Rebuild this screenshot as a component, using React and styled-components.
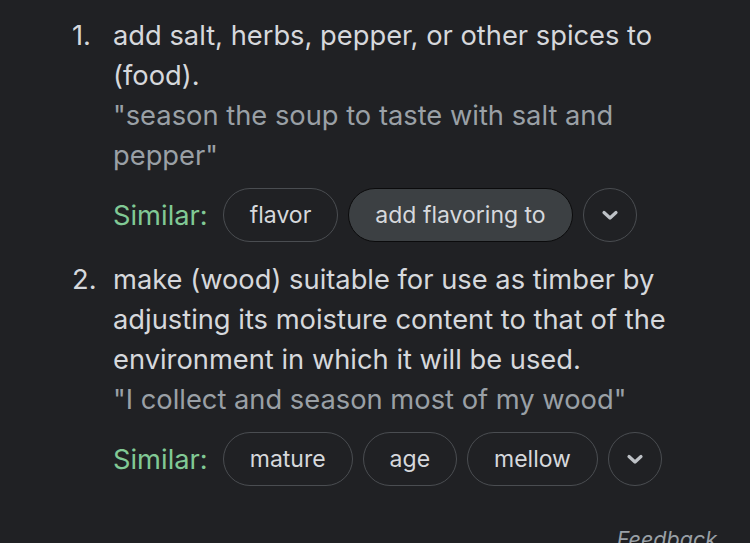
import React from 'react';
import styled, { createGlobalStyle } from 'styled-components';

const GlobalStyle = createGlobalStyle`
  html, body {
    margin: 0;
    padding: 0;
    background: #202124;
  }
  body {
    font-family: Inter, "Noto Sans", sans-serif;
    -webkit-font-smoothing: antialiased;
  }
`;

const Page = styled.div`
  width: 750px;
  height: 543px;
  overflow: hidden;
  background: #202124;
  padding: 16px 0 0 0;
  box-sizing: border-box;
  display: flex;
  flex-direction: column;
`;

const List = styled.ol`
  list-style: none;
  margin: 0;
  padding: 0 0 0 72px;
  display: flex;
  flex-direction: column;
  gap: 18px;
`;

const Item = styled.li`
  display: flex;
`;

const Num = styled.span`
  width: 41px;
  flex: none;
  font-size: 27.3px;
  line-height: 40px;
  color: #d6d8dc;
`;

const Body = styled.div`
  display: flex;
  flex-direction: column;
  width: 570px;
`;

const Definition = styled.div`
  font-size: 27.3px;
  line-height: 40px;
  color: #d6d8dc;
`;

const Example = styled.div`
  font-size: 27.3px;
  line-height: 40px;
  color: #9aa0a6;
`;

const SimilarRow = styled.div`
  display: flex;
  align-items: center;
  gap: 10px;
  margin-top: 12px;
`;

const Label = styled.span`
  font-size: 27.3px;
  color: #81c995;
  margin-right: 5px;
`;

const Chip = styled.span`
  height: 54px;
  box-sizing: border-box;
  padding: 0 26px;
  border-radius: 27px;
  display: inline-flex;
  align-items: center;
  font-size: 23px;
  color: #d6d8dc;
  border: 1.5px solid ${p => (p.$active ? '#0b0b0c' : '#4a4d51')};
  background: ${p => (p.$active ? '#3c4043' : 'transparent')};
`;

const More = styled.span`
  width: 54px;
  height: 54px;
  box-sizing: border-box;
  border-radius: 50%;
  border: 1.5px solid #4a4d51;
  display: inline-flex;
  align-items: center;
  justify-content: center;
`;

const Feedback = styled.div`
  margin-top: auto;
  align-self: flex-end;
  margin-right: 33px;
  margin-bottom: -9px;
  font-size: 21.5px;
  font-style: italic;
  color: #9aa0a6;
`;

const Chevron = () => (
  <svg width="24" height="24" viewBox="0 0 24 24">
    <path d="M6 9.5l6 5.5 6-5.5" fill="none" stroke="#bdc1c6" strokeWidth="3.2" strokeLinecap="round" strokeLinejoin="round" />
  </svg>
);

const senses = [
  {
    def: 'add salt, herbs, pepper, or other spices to (food).',
    ex: '"season the soup to taste with salt and pepper"',
    similar: ['flavor', 'add flavoring to'],
    active: 1,
  },
  {
    def: 'make (wood) suitable for use as timber by adjusting its moisture content to that of the environment in which it will be used.',
    ex: '"I collect and season most of my wood"',
    similar: ['mature', 'age', 'mellow'],
    active: -1,
  },
];

export default function App() {
  return (
    <>
      <GlobalStyle />
      <Page>
        <List>
          {senses.map((s, i) => (
            <Item key={i}>
              <Num>{i + 1}.</Num>
              <Body>
                <Definition>{s.def}</Definition>
                <Example>{s.ex}</Example>
                <SimilarRow>
                  <Label>Similar:</Label>
                  {s.similar.map((w, j) => (
                    <Chip key={w} $active={j === s.active}>{w}</Chip>
                  ))}
                  <More><Chevron /></More>
                </SimilarRow>
              </Body>
            </Item>
          ))}
        </List>
        <Feedback>Feedback</Feedback>
      </Page>
    </>
  );
}
